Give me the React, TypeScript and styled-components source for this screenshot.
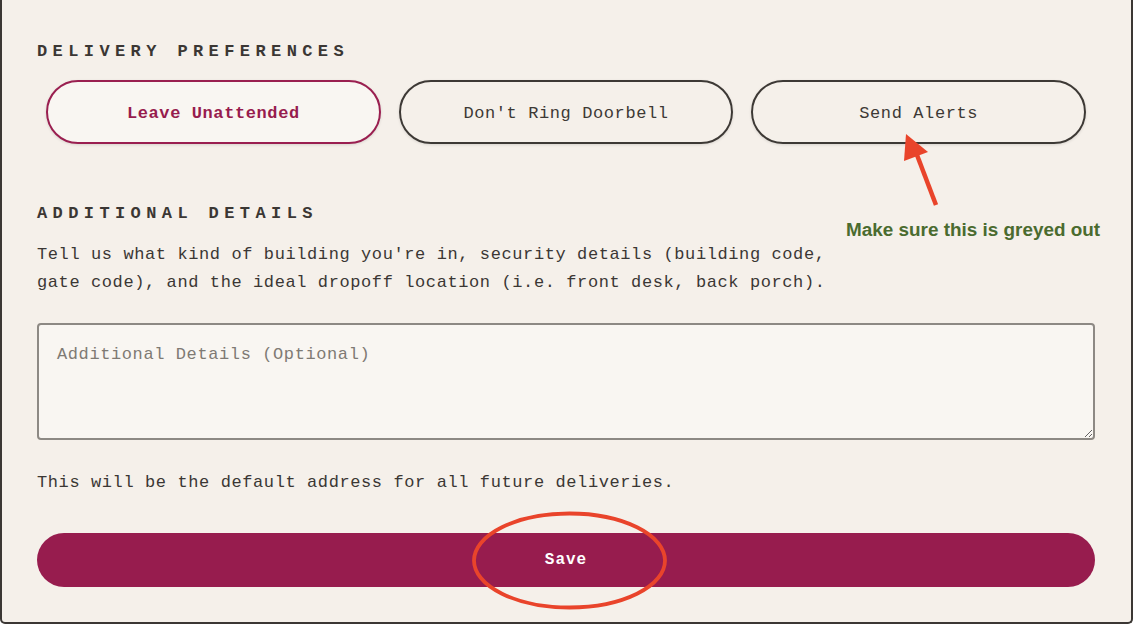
import React from "react";
import styled, { createGlobalStyle } from "styled-components";

const Global = createGlobalStyle`
  html, body { margin: 0; padding: 0; background: #ffffff; }
  * { box-sizing: border-box; }
`;

const Stage = styled.div`
  position: relative;
  width: 1134px;
  height: 624px;
  overflow: hidden;
`;

const Panel = styled.div`
  width: 1133px;
  height: 624px;
  background: #f5f0ea;
  border: 2px solid #3b3734;
  border-top: none;
  border-radius: 0 0 5px 5px;
  padding: 42px 36px 35px 35px;
  display: flex;
  flex-direction: column;
  color: #3b3734;
  font-family: "Liberation Mono", "DejaVu Sans Mono", monospace;
`;

const Heading = styled.h3<{ $mt?: number }>`
  margin: ${(p) => p.$mt ?? 0}px 0 0 0;
  font-family: "Liberation Mono", monospace;
  font-weight: 700;
  font-size: 17px;
  letter-spacing: 5.4px;
  line-height: 20px;
  color: #3b3734;
`;

const OptionRow = styled.div`
  margin-top: 18px;
  display: flex;
  gap: 18px;
  padding: 0 9px;
`;

const Option = styled.button<{ $active?: boolean }>`
  flex: 1;
  height: 64px;
  border-radius: 32px;
  border: 2px solid ${(p) => (p.$active ? "#9a1f50" : "#3d3935")};
  background: ${(p) => (p.$active ? "#f9f6f2" : "transparent")};
  color: ${(p) => (p.$active ? "#971c4e" : "#3d3935")};
  font-family: "Liberation Mono", monospace;
  font-weight: ${(p) => (p.$active ? 700 : 400)};
  font-size: 17px;
  letter-spacing: 0.6px;
  padding: 2px 0 0 0;
  box-shadow: 0 1px 3px rgba(0, 0, 0, 0.12);
  cursor: pointer;
`;

const Paragraph = styled.p<{ $mt: number }>`
  margin: ${(p) => p.$mt}px 0 0 0;
  font-size: 17px;
  letter-spacing: 0.6px;
  line-height: 28px;
  color: #3b3734;
`;

const Details = styled.textarea`
  margin-top: 26px;
  width: 100%;
  height: 117px;
  flex: none;
  border: 2px solid #8d8984;
  border-radius: 4px;
  background: #f9f6f2;
  padding: 16px 18px;
  font-family: "Liberation Mono", monospace;
  font-size: 17px;
  letter-spacing: 0.6px;
  line-height: 28px;
  color: #3b3734;
  resize: vertical;
  outline: none;
  &::placeholder {
    color: #7f7a74;
  }
`;

const SaveButton = styled.button`
  margin-top: 36px;
  height: 54px;
  width: 100%;
  border: none;
  border-radius: 27px;
  background: #971c4e;
  color: #ffffff;
  font-family: "Liberation Mono", monospace;
  font-weight: 700;
  font-size: 16px;
  letter-spacing: 1px;
  cursor: pointer;
`;

const Overlay = styled.svg`
  position: absolute;
  left: 0;
  top: 0;
  pointer-events: none;
`;

const Note = styled.span`
  position: absolute;
  left: 846px;
  top: 220px;
  font-family: "Liberation Sans", Arial, sans-serif;
  font-weight: 700;
  font-size: 18.9px;
  line-height: 20px;
  color: #4a6b2f;
  white-space: nowrap;
`;

export default function App() {
  return (
    <>
      <Global />
      <Stage>
        <Panel>
          <Heading>DELIVERY PREFERENCES</Heading>
          <OptionRow>
            <Option $active>Leave Unattended</Option>
            <Option>Don't Ring Doorbell</Option>
            <Option>Send Alerts</Option>
          </OptionRow>
          <Heading $mt={60}>ADDITIONAL DETAILS</Heading>
          <Paragraph $mt={17}>
            Tell us what kind of building you're in, security details (building code,
            <br />
            gate code), and the ideal dropoff location (i.e. front desk, back porch).
          </Paragraph>
          <Details placeholder="Additional Details (Optional)" />
          <Paragraph $mt={29}>This will be the default address for all future deliveries.</Paragraph>
          <SaveButton>Save</SaveButton>
        </Panel>
        <Overlay width={1134} height={624} viewBox="0 0 1134 624">
          <line x1={936} y1={205} x2={917} y2={155} stroke="#e9442b" strokeWidth={4.5} strokeLinecap="butt" />
          <polygon points="906,134 928,152 904,161" fill="#e9442b" />
          <ellipse cx={569.5} cy={560.5} rx={95.5} ry={47} fill="none" stroke="#e9442b" strokeWidth={3.8} />
        </Overlay>
        <Note>Make sure this is greyed out</Note>
      </Stage>
    </>
  );
}
